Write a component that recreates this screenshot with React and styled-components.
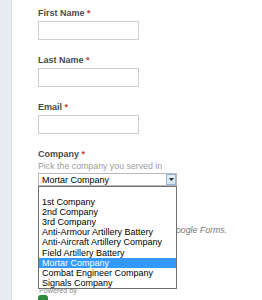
import React from 'react';
import styled, { createGlobalStyle } from 'styled-components';

const Global = createGlobalStyle`
  html, body { margin: 0; padding: 0; background: #fff; }
  body { font-family: "Liberation Sans", Arial, sans-serif; }
`;

const Page = styled.div`
  display: flex;
  width: 262px;
  height: 300px;
  overflow: hidden;
  background: #fff;
`;

const SideStrip = styled.div`
  flex: none;
  width: 11px;
  background: #e8ecf3;
  border-right: 1px solid #d8dde6;
`;

const Main = styled.div`
  flex: 1;
  min-width: 0;
  display: flex;
  flex-direction: column;
`;

const Form = styled.div`
  display: flex;
  flex-direction: column;
  gap: 15px;
  padding: 8px 0 0 26px;
`;

const Field = styled.div`
  display: flex;
  flex-direction: column;
`;

const Label = styled.div`
  font-size: 9px;
  line-height: 11px;
  font-weight: bold;
  color: #4a4a4a;
`;

const Req = styled.span`
  color: #c43d2f;
`;

const TextInput = styled.div`
  margin-top: 2px;
  width: 101px;
  height: 19px;
  box-sizing: border-box;
  border: 1px solid #cfcfcf;
  background: #fff;
`;

const Help = styled.div`
  margin-top: 1px;
  font-size: 8.8px;
  line-height: 11px;
  color: #9c9c9c;
`;

const SelectWrap = styled.div`
  position: relative;
  margin-top: 1px;
  width: 139px;
`;

const SelectBox = styled.div`
  display: flex;
  align-items: center;
  justify-content: space-between;
  height: 13px;
  box-sizing: border-box;
  border: 1px solid #b8b8b8;
  background: #fff;
  font-size: 9px;
  color: #000;
  padding-left: 3px;
`;

const ArrowButton = styled.div`
  display: flex;
  align-items: center;
  justify-content: center;
  width: 10px;
  height: 11px;
  box-sizing: border-box;
  border: 1px solid #93b6d8;
  background: linear-gradient(#e6eff8, #d3e3f3);
`;

const OptionList = styled.div`
  position: absolute;
  top: 13px;
  left: 0;
  width: 139px;
  box-sizing: border-box;
  border: 1px solid #707070;
  background: #fff;
  z-index: 2;
`;

const Option = styled.div`
  height: 10.1px;
  line-height: 10.1px;
  font-size: 9px;
  padding-left: 3px;
  white-space: nowrap;
  color: ${p => (p.$selected ? '#fff' : '#000')};
  background: ${p => (p.$selected ? '#3399ff' : 'transparent')};
`;

const Notice = styled.div`
  margin-top: 39px;
  padding-left: 26px;
  font-size: 8.8px;
  line-height: 11px;
  font-style: italic;
  color: #7a7a7a;
  white-space: nowrap;
`;

const Divider = styled.div`
  margin-top: 28px;
  height: 1px;
  background: #e2e2e2;
`;

const Footer = styled.div`
  display: flex;
  flex-direction: column;
  padding-left: 27px;
  margin-top: 23px;
`;

const Powered = styled.div`
  font-size: 7.2px;
  line-height: 8px;
  color: #8a8a8a;
`;

const Logo = styled.div`
  margin-top: 0;
  margin-left: -1px;
  width: 10px;
  height: 12px;
  border-radius: 3px;
  background: #2e8b3e;
`;

const options = [
  '',
  '1st Company',
  '2nd Company',
  '3rd Company',
  'Anti-Armour Artillery Battery',
  'Anti-Aircraft Artillery Company',
  'Field Artillery Battery',
  'Mortar Company',
  'Combat Engineer Company',
  'Signals Company',
];

export default function App() {
  const selected = 'Mortar Company';
  return (
    <>
      <Global />
      <Page>
        <SideStrip />
        <Main>
          <Form>
            <Field>
              <Label>First Name <Req>*</Req></Label>
              <TextInput />
            </Field>
            <Field>
              <Label>Last Name <Req>*</Req></Label>
              <TextInput />
            </Field>
            <Field>
              <Label>Email <Req>*</Req></Label>
              <TextInput />
            </Field>
            <Field>
              <Label>Company <Req>*</Req></Label>
              <Help>Pick the company you served in</Help>
              <SelectWrap>
                <SelectBox>
                  <span>{selected}</span>
                  <ArrowButton>
                    <svg width="5" height="3" viewBox="0 0 5 3">
                      <path d="M0 0 H5 L2.5 3 Z" fill="#2a2a2a" />
                    </svg>
                  </ArrowButton>
                </SelectBox>
                <OptionList>
                  {options.map((o, i) => (
                    <Option key={i} $selected={o === selected}>{o}</Option>
                  ))}
                </OptionList>
              </SelectWrap>
            </Field>
          </Form>
          <Notice>Never submit passwords through Google Forms.</Notice>
          <Divider />
          <Footer>
            <Powered>Powered by</Powered>
            <Logo />
          </Footer>
        </Main>
      </Page>
    </>
  );
}
